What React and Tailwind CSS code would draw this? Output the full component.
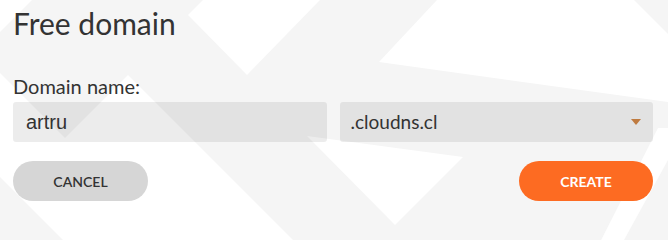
import React, { useState } from "react";

// faint diagonal pattern behind the form
function Backdrop() {
  return (
    <svg className="absolute left-0 top-0" width="668" height="260" viewBox="0 0 668 260" aria-hidden="true">
      <g fill="#ffffff">
        <polygon points="0,0 32,0 0,32" />
        <polygon points="203,0 188,15 247,75 320,0" />
        <polygon points="437,0 634,0 668,34 668,102 379,62" />
        <polygon points="0,73 65,138 128,75 313,260 83,260 0,177" />
        <polygon points="307,136 463,157 395,225" />
        <polygon points="658,128 668,128 668,160 613,260 591,260" />
      </g>
    </svg>
  );
}

export default function App() {
  const [name, setName] = useState("artru");
  const [zone, setZone] = useState(".cloudns.cl");

  return (
    <div className="relative w-[668px] h-screen min-h-[211px] overflow-hidden bg-[#f5f5f5] font-['Lato',sans-serif] text-[#333]">
      <Backdrop />

      <div className="relative pl-[13px] pr-[15px] pt-[5px]">
        <h1 className="text-[30px] leading-[36px] font-normal text-[#333]">Free domain</h1>

        <label className="block mt-[33px] text-[20px] leading-[24px]">Domain name:</label>

        <div className="mt-[4px] grid grid-cols-2 gap-[13px]">
          <input
            value={name}
            onChange={(e) => setName(e.target.value)}
            className="h-[40px] rounded-[3px] bg-black/[0.075] px-[13px] font-['Liberation_Sans',Arial,sans-serif] text-[20px] text-[#333] outline-none"
          />
          <div className="relative h-[40px] rounded-[3px] bg-black/[0.075] flex items-center pl-[11px] pr-[12px]">
            <span className="flex-1 text-[19px]">{zone}</span>
            <svg width="10" height="6" viewBox="0 0 10 6" className="text-[#bf7b40]">
              <path d="M0 0h10L5 6z" fill="currentColor" />
            </svg>
          </div>
        </div>

        <div className="mt-[19px] flex justify-between">
          <button
            type="button"
            onClick={() => setZone(".cloudns.cl")}
            className="w-[135px] h-[40px] rounded-full bg-[#d6d6d6] text-[14px] font-semibold text-[#333]"
          >
            CANCEL
          </button>
          <button
            type="button"
            className="w-[134px] h-[40px] rounded-full bg-[#fd6b22] text-[14px] font-bold text-white"
          >
            CREATE
          </button>
        </div>
      </div>
    </div>
  );
}
